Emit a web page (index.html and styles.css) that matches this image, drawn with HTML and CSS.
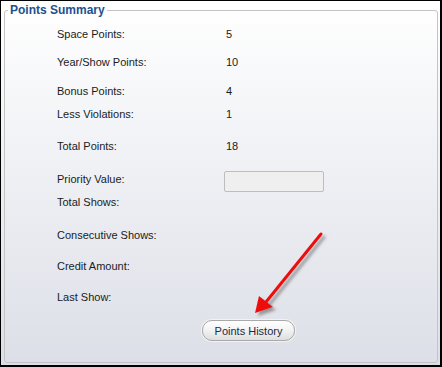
FILE: index.html
```html
<!DOCTYPE html>
<html lang="en">
<head>
  <meta charset="UTF-8">
  <title>Points Summary</title>
  <link rel="stylesheet" href="styles.css">
</head>
<body>
  <div class="frame">
    <fieldset class="summary">
      <legend>Points Summary</legend>

      <div class="rows">
        <div class="row r1"><span class="label">Space Points:</span><span class="value">5</span></div>
        <div class="row r2"><span class="label">Year/Show Points:</span><span class="value">10</span></div>
        <div class="row r3"><span class="label">Bonus Points:</span><span class="value">4</span></div>
        <div class="row r4"><span class="label">Less Violations:</span><span class="value">1</span></div>
        <div class="row r5"><span class="label">Total Points:</span><span class="value">18</span></div>
        <div class="row priority"><span class="label">Priority Value:</span><input class="field" type="text"></div>
        <div class="row r7"><span class="label">Total Shows:</span></div>
        <div class="row r8"><span class="label">Consecutive Shows:</span></div>
        <div class="row r9"><span class="label">Credit Amount:</span></div>
        <div class="row r10"><span class="label">Last Show:</span></div>
        <button class="history_button">Points History</button>
      </div>
    </fieldset>

    <!-- callout arrow drawn over the page -->
    <svg class="callout" width="442" height="367" viewBox="0 0 442 367">
      <defs>
        <filter id="shade" x="-20%" y="-20%" width="150%" height="150%">
          <feDropShadow dx="3" dy="3" stdDeviation="1.6" flood-color="#555" flood-opacity="0.55"/>
        </filter>
      </defs>
      <g filter="url(#shade)">
        <line x1="321" y1="234" x2="266" y2="302" stroke="#ee1111" stroke-width="3" stroke-linecap="round"/>
        <polygon points="255,313 259,296 273,307" fill="#ee1111"/>
      </g>
    </svg>
  </div>
</body>
</html>
```

FILE: styles.css
```css
/* General styles */
body {
  margin: 0;
  font-family: 'Liberation Sans', Arial, sans-serif;
  font-size: 11px;
  color: #1b1b1b;
}

.frame {
  position: relative;
  box-sizing: border-box;
  width: 442px;
  height: 367px;
  display: flex;
  flex-direction: column;
  border-top: 1px solid #000;
  border-left: 1px solid #000;
  border-right: 2px solid #000;
  border-bottom: 2px solid #000;
  background: linear-gradient(#ffffff 0%, #f3f4f7 35%, #dcdfe7 100%);
}

/* Group box */
.summary {
  flex: 1;
  margin: 1px 2px 2px 3px;
  padding: 0;
  border: 1px solid #c4c4c4;
  border-radius: 3px;
  min-width: 0;
}

.summary legend {
  margin-left: 3px;
  padding: 0 2px;
  font-size: 12px;
  font-weight: bold;
  line-height: 16px;
  color: #22508e;
}

.rows {
  display: flex;
  flex-direction: column;
  align-items: flex-start;
  padding-left: 52px;
}

.row {
  display: flex;
  height: 13px;
  line-height: 13px;
}

.label {
  width: 169px;
}

.r1 { margin-top: 10px; }
.r2 { margin-top: 15px; }
.r3 { margin-top: 16px; }
.r4 { margin-top: 10px; }
.r5 { margin-top: 19px; }
.r7 { margin-top: 4px; }
.r8 { margin-top: 20px; }
.r9 { margin-top: 18px; }
.r10 { margin-top: 18px; }

.priority {
  margin-top: 18px;
  height: 21px;
  align-items: flex-start;
}

.priority .label {
  padding-top: 2px;
  width: 167px;
}

.field {
  box-sizing: border-box;
  width: 100px;
  height: 21px;
  margin: 0;
  padding: 0;
  border: 1px solid #bdbdbd;
  border-radius: 2px;
  background-color: #efefef;
}

/* Button styling */
.history_button {
  margin: 16px 0 0 145px;
  box-sizing: border-box;
  width: 93px;
  height: 21px;
  padding: 0;
  font-family: 'Liberation Sans', Arial, sans-serif;
  font-size: 11px;
  color: #1c2844;
  border: 1px solid #a9a9a9;
  border-radius: 10px;
  background: linear-gradient(#ffffff 0%, #f4f4f4 45%, #dedede 100%);
  box-shadow: 0 0 0 1px #f2f2f2;
}

.callout {
  position: absolute;
  left: -1px;
  top: -1px;
  pointer-events: none;
}
```
